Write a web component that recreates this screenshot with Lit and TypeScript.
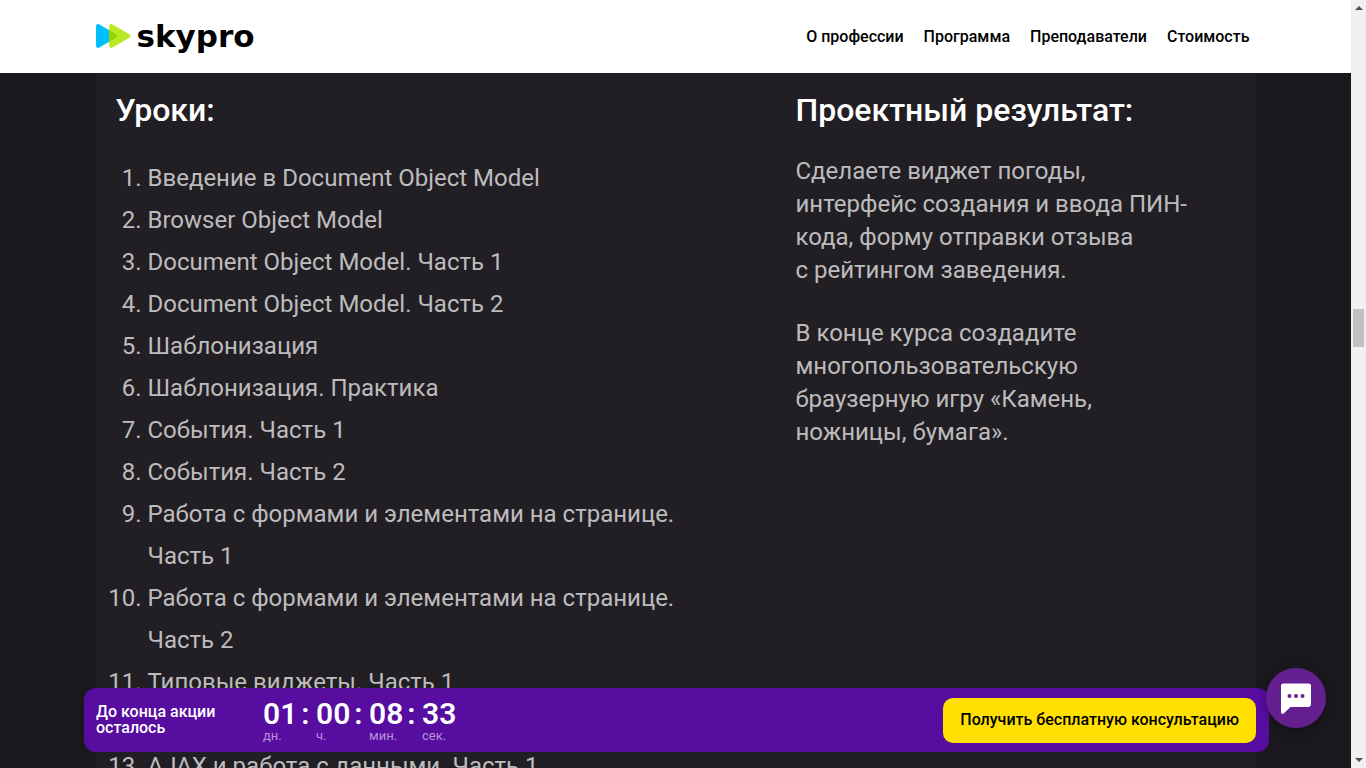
import { LitElement, html, css } from "lit";
import { customElement } from "lit/decorators.js";

const NAV = ["О профессии", "Программа", "Преподаватели", "Стоимость"];

const LESSONS = [
  "Введение в Document Object Model",
  "Browser Object Model",
  "Document Object Model. Часть 1",
  "Document Object Model. Часть 2",
  "Шаблонизация",
  "Шаблонизация. Практика",
  "События. Часть 1",
  "События. Часть 2",
  "Работа с формами и элементами на странице. Часть 1",
  "Работа с формами и элементами на странице. Часть 2",
  "Типовые виджеты. Часть 1",
  "Типовые виджеты. Часть 2",
  "AJAX и работа с данными. Часть 1",
];

const TIMER = [
  { value: "01", unit: "дн." },
  { value: "00", unit: "ч." },
  { value: "08", unit: "мин." },
  { value: "33", unit: "сек." },
];

@customElement("site-header")
export class SiteHeader extends LitElement {
  static styles = css`
    :host {
      display: block;
      background: #fff;
    }
    .inner {
      box-sizing: border-box;
      max-width: 1160px;
      height: 73px;
      margin: 0 auto;
      padding-right: 6px;
      display: flex;
      align-items: center;
      justify-content: space-between;
    }
    .logo {
      display: flex;
      align-items: center;
      gap: 6px;
      padding-bottom: 2px;
      color: #000;
      text-decoration: none;
      font: bold 31px/32px "DejaVu Sans", sans-serif;
    }
    .mark {
      display: block;
      width: 35px;
      height: 24px;
    }
    nav {
      display: flex;
      gap: 20px;
    }
    .link {
      color: #000;
      text-decoration: none;
      font-weight: 500;
      font-size: 16px;
      line-height: 24px;
    }
  `;

  render() {
    return html`
      <div class="inner">
        <a class="logo" href="#top">
          <svg class="mark" viewBox="0 0 35 24" aria-hidden="true">
            <path fill="#00bfff" d="M0 2.2C0 .4 1.8-.5 3.4.4L20 10.3c1.400.9 1.400 2.600 0 3.500L3.400 23.600C1.800 24.500 0 23.600 0 21.800z" />
            <path fill="#b8ea26" d="M13.200 2.200c0-1.800 1.800-2.700 3.400-1.800L33.400 10.300c1.400.9 1.400 2.600 0 3.500L16.600 23.600c-1.600.9-3.400 0-3.400-1.800z" />
            <path fill="#93d500" d="M13.200 6.200L20 10.300c1.400.9 1.400 2.600 0 3.500l-6.800 4z" />
          </svg>
          <span>skypro</span>
        </a>
        <nav>${NAV.map((label) => html`<a class="link" href="#">${label}</a>`)}</nav>
      </div>
    `;
  }
}

@customElement("course-module")
export class CourseModule extends LitElement {
  static styles = css`
    :host {
      display: block;
    }
    .card {
      box-sizing: border-box;
      max-width: 1160px;
      margin: 0 auto;
      padding: 17px 20px 40px;
      display: grid;
      grid-template-columns: 17fr 11fr;
      background: #221f24;
      color: #bdbcbd;
      font-size: 24px;
    }
    .lessons {
      padding-right: 70px;
    }
    h2 {
      margin: 0;
      color: #fff;
      font-weight: 500;
      font-size: 32px;
      line-height: 40px;
    }
    ol {
      margin: 27px 0 0;
      padding-left: 32px;
      line-height: 42px;
    }
    .result {
      max-width: 400px;
    }
    p {
      margin: 0 0 30px;
      line-height: 33px;
    }
    h2 + p {
      margin-top: 25px;
    }
  `;

  render() {
    return html`
      <section class="card">
        <div class="lessons">
          <h2>Уроки:</h2>
          <ol>${LESSONS.map((lesson) => html`<li>${lesson}</li>`)}</ol>
        </div>
        <div class="result">
          <h2>Проектный результат:</h2>
          <p>Сделаете виджет погоды, интерфейс создания и ввода ПИН-кода, форму отправки отзыва с&nbsp;рейтингом заведения.</p>
          <p>В конце курса создадите многопользовательскую браузерную игру «Камень, ножницы, бумага».</p>
        </div>
      </section>
    `;
  }
}

@customElement("promo-bar")
export class PromoBar extends LitElement {
  static styles = css`
    :host {
      display: block;
    }
    .bar {
      box-sizing: border-box;
      height: 64px;
      padding: 0 13px 0 12px;
      display: flex;
      align-items: center;
      border-radius: 12px;
      background: #570da0;
      color: #fff;
    }
    .caption {
      width: 167px;
      font-weight: 500;
      font-size: 16px;
      line-height: 16px;
    }
    .timer {
      display: flex;
      flex: 1;
    }
    .cell {
      width: 53px;
    }
    .value {
      display: flex;
      gap: 4px;
      font-weight: 600;
      font-size: 30px;
      line-height: 32px;
    }
    .unit {
      font-size: 13px;
      line-height: 12px;
      color: #b592d6;
    }
    .cta {
      height: 45px;
      padding: 0 17px;
      border: 0;
      border-radius: 10px;
      background: #ffe000;
      color: #000;
      font: 500 16px/24px "Roboto", sans-serif;
      cursor: pointer;
    }
  `;

  render() {
    return html`
      <div class="bar">
        <div class="caption">До конца акции<br />осталось</div>
        <div class="timer" role="timer">
          ${TIMER.map(
            (t, i) => html`
              <div class="cell">
                <div class="value"><span>${t.value}</span>${i < TIMER.length - 1 ? html`<span>:</span>` : ""}</div>
                <div class="unit">${t.unit}</div>
              </div>
            `
          )}
        </div>
        <button class="cta" type="button">Получить бесплатную консультацию</button>
      </div>
    `;
  }
}

@customElement("app-root")
export class AppRoot extends LitElement {
  static styles = css`
    :host {
      display: flex;
      height: 100vh;
      overflow: hidden;
      font-family: "Roboto", "Noto Sans", sans-serif;
    }
    .page {
      position: relative;
      flex: 1;
      min-width: 0;
      overflow: hidden;
      background: #1a181c;
    }
    .promo {
      position: absolute;
      left: 84px;
      right: 82px;
      bottom: 16px;
    }
    .chat {
      position: absolute;
      right: 25px;
      bottom: 40px;
      width: 60px;
      height: 60px;
      padding: 0;
      display: grid;
      place-items: center;
      border: 0;
      border-radius: 50%;
      background: #652090;
      box-shadow: 0 2px 8px rgba(0, 0, 0, 0.3);
      cursor: pointer;
    }
    .scrollbar {
      box-sizing: border-box;
      width: 15px;
      padding: 6px 2px;
      display: grid;
      grid-template-rows: 303px 38px 1fr;
      justify-items: center;
      background: #f0f0f0;
    }
    .thumb {
      width: 11px;
      background: #c1c1c1;
    }
    .arrow {
      display: block;
      width: 8px;
      height: 4px;
    }
    .down {
      align-self: end;
    }
  `;

  render() {
    return html`
      <div class="page">
        <site-header></site-header>
        <course-module></course-module>
        <promo-bar class="promo"></promo-bar>
        <button class="chat" type="button" aria-label="Открыть чат">
          <svg width="30" height="31" viewBox="0 0 30 31" aria-hidden="true">
            <path fill="#fff" d="M2.500 0.500h25a2.500 2.500 0 0 1 2.500 2.500v18a3 3 0 0 1-3 3H9.500L3 30.200c-1.500 1.300-3 .500-3-1.300V3a2.500 2.500 0 0 1 2.500-2.500z" />
            <g fill="#652090">
              <circle cx="8.500" cy="13" r="2" />
              <circle cx="15" cy="13" r="2" />
              <circle cx="21.500" cy="13" r="2" />
            </g>
          </svg>
        </button>
      </div>
      <div class="scrollbar" aria-hidden="true">
        <svg class="arrow" viewBox="0 0 8 4"><path fill="#505050" d="M0 4L4 0l4 4z" /></svg>
        <div class="thumb"></div>
        <svg class="arrow down" viewBox="0 0 8 4"><path fill="#505050" d="M0 0h8L4 4z" /></svg>
      </div>
    `;
  }
}
